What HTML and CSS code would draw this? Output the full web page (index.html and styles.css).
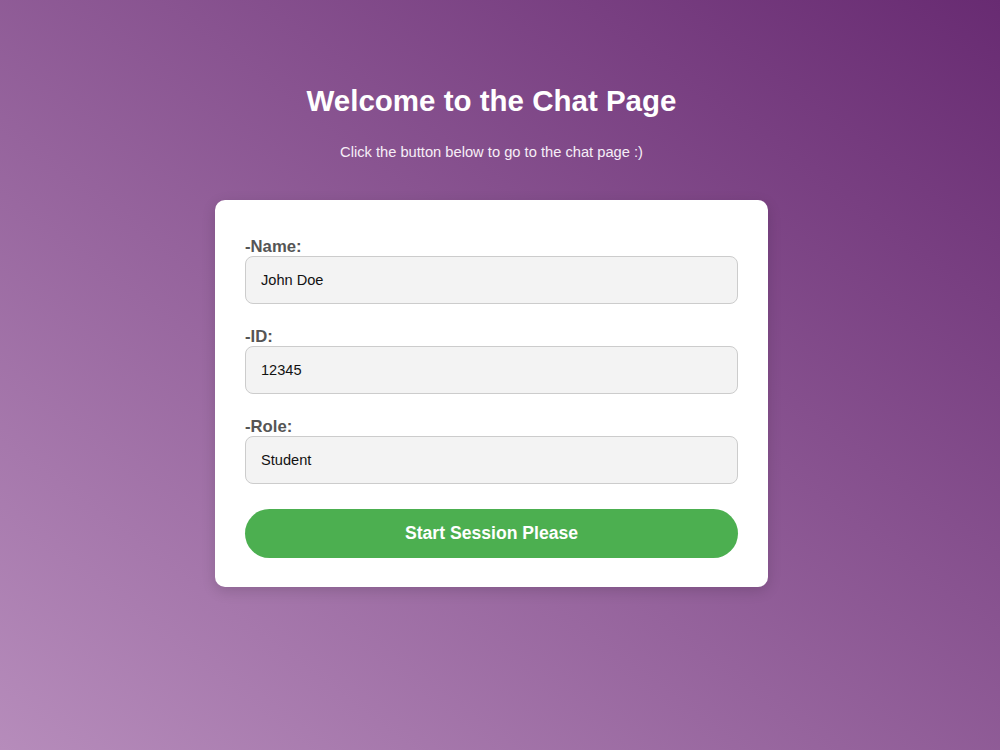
FILE: index.html
```html
<!DOCTYPE html>
<html lang="en">
<head>
    <meta charset="UTF-8">
    <meta name="viewport" content="width=device-width, initial-scale=1.0">
    <title>Chat Page</title>
    <link rel="stylesheet" href="styles.css">
</head>
<body>

    <!-- Welcome header -->
    <div class="page">
        <h1>Welcome to the Chat Page</h1>
        <p class="subtitle">Click the button below to go to the chat page :)</p>

        <!-- Session form -->
        <form id="session-form" class="card" action="/chat" method="GET">
            <div class="field">
                <label for="name">-Name:</label>
                <input type="text" id="name" name="name" value="John Doe">
            </div>
            <div class="field">
                <label for="user-id">-ID:</label>
                <input type="text" id="user-id" name="id" value="12345">
            </div>
            <div class="field">
                <label for="role">-Role:</label>
                <input type="text" id="role" name="role" value="Student">
            </div>
            <input type="submit" value="Start Session Please">
        </form>
    </div>

</body>
</html>
```

FILE: styles.css
```css
body {
    font-family: "Liberation Sans", Arial, sans-serif;
    background: linear-gradient(to top right, #b68cbb, #682b72);
    height: 100vh;
    margin: 0;
    color: #fff;
}
.page {
    display: flex;
    flex-direction: column;
    align-items: center;
    padding: 83px 17px 0 0;
}
h1 {
    font-size: 29.5px;
    line-height: 36px;
    margin: 0;
}
.subtitle {
    font-size: 14.7px;
    line-height: 18px;
    margin: 24px 0 39px;
    color: #f6eef7;
}
.card {
    background-color: #fff;
    width: 493px;
    padding: 37px 30px 29px;
    border-radius: 10px;
    box-shadow: 0 4px 14px rgba(0, 0, 0, 0.15);
}
.field {
    margin-bottom: 23px;
}
.field:last-of-type {
    margin-bottom: 25px;
}
label {
    display: block;
    font-size: 16.7px;
    line-height: 19px;
    font-weight: bold;
    color: #555;
}
input[type="text"] {
    display: block;
    width: 100%;
    height: 48px;
    padding: 0 15px 1px;
    font-family: inherit;
    font-size: 14.6px;
    color: #111;
    background-color: #f3f3f3;
    border: 1px solid #ccc;
    border-radius: 8px;
    box-sizing: border-box;
}
input[type="submit"] {
    display: block;
    width: 100%;
    height: 49px;
    font-family: inherit;
    font-size: 17.6px;
    font-weight: bold;
    background-color: #4caf50;
    color: white;
    border: none;
    border-radius: 25px;
    cursor: pointer;
}
input[type="submit"]:hover {
    background-color: #449d48;
}
```
